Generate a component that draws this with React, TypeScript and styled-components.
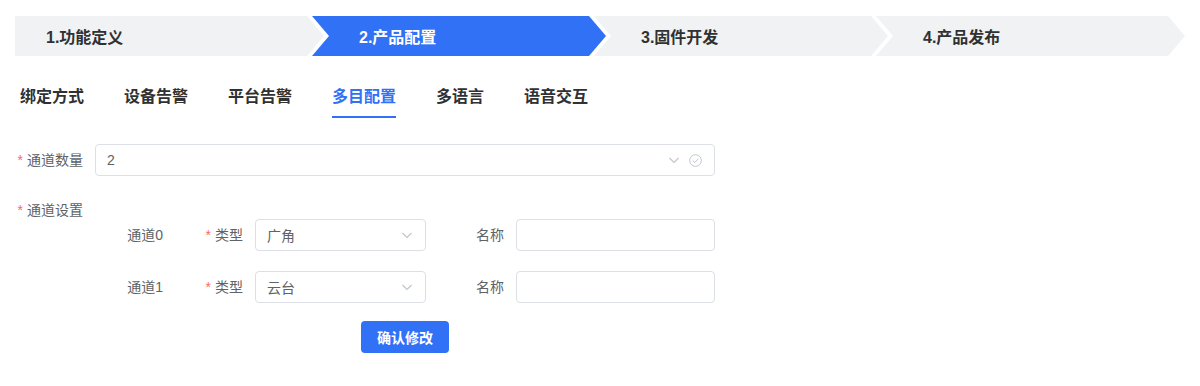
import React from 'react';
import styled, { createGlobalStyle } from 'styled-components';

const GlobalStyle = createGlobalStyle`
    body {
        margin: 0;
        background: #ffffff;
        font-family: "Liberation Sans", "Noto Sans CJK SC", sans-serif;
    }
`;

const primary = '#3071f6';

const Page = styled.div`
    width: 1200px;
    height: 386px;
    padding: 16px 15px 0 15px;
    box-sizing: border-box;
`;

const Steps = styled.div`
    display: flex;
    height: 40px;
`;

const Step = styled.div<{ $active?: boolean; $first?: boolean; $width?: number }>`
    display: flex;
    align-items: center;
    box-sizing: border-box;
    height: 40px;
    ${p => (p.$width ? `width: ${p.$width}px; flex: none;` : 'flex: 1;')}
    margin-left: ${p => (p.$first ? '0' : '-12px')};
    padding-left: ${p => (p.$first ? '31px' : '47px')};
    background: ${p => (p.$active ? primary : '#f1f2f4')};
    color: ${p => (p.$active ? '#ffffff' : '#303133')};
    font-size: 16px;
    font-weight: bold;
    clip-path: ${p =>
        p.$first
            ? 'polygon(0 0, calc(100% - 17px) 0, 100% 50%, calc(100% - 17px) 100%, 0 100%)'
            : 'polygon(0 0, calc(100% - 17px) 0, 100% 50%, calc(100% - 17px) 100%, 0 100%, 17px 50%)'};
`;

const Tabs = styled.div`
    display: flex;
    gap: 40px;
    margin-top: 24px;
    padding-left: 5px;
`;

const Tab = styled.div<{ $active?: boolean }>`
    height: 38px;
    line-height: 34px;
    font-size: 16px;
    font-weight: bold;
    color: ${p => (p.$active ? primary : '#303133')};
    border-bottom: 2px solid ${p => (p.$active ? primary : 'transparent')};
    box-sizing: border-box;
`;

const Form = styled.div`
    margin-top: 26px;
    display: flex;
    flex-direction: column;
    gap: 18px;
`;

const FormItem = styled.div`
    display: flex;
    align-items: flex-start;
`;

const Label = styled.label<{ $width?: number }>`
    flex: none;
    width: ${p => p.$width ?? 80}px;
    box-sizing: border-box;
    padding-right: 12px;
    text-align: right;
    line-height: 32px;
    font-size: 14px;
    color: #606266;
    white-space: nowrap;
`;

const Star = styled.span`
    color: #f56c6c;
    margin-right: 4px;
`;

const Field = styled.div<{ $width?: number }>`
    display: flex;
    align-items: center;
    ${p => (p.$width ? `width: ${p.$width}px; flex: none;` : 'flex: 1;')}
    height: 32px;
    box-sizing: border-box;
    padding: 0 12px 0 11px;
    border: 1px solid #dcdfe6;
    border-radius: 4px;
    font-size: 14px;
    color: #606266;
    background: #ffffff;
`;

const Value = styled.span`
    flex: 1;
`;

const Icons = styled.span`
    display: flex;
    align-items: center;
    gap: 9px;
    color: #c0c4cc;
`;

const Content = styled.div`
    width: 620px;
    display: flex;
    flex-direction: column;
`;

const ChannelList = styled.div`
    display: flex;
    flex-direction: column;
    gap: 20px;
    padding-top: 25px;
`;

const ChannelRow = styled.div`
    display: flex;
    align-items: center;
`;

const Actions = styled.div`
    display: flex;
    justify-content: center;
    margin-top: 18px;
`;

const Button = styled.button`
    width: 88px;
    height: 32px;
    border: none;
    border-radius: 4px;
    background: ${primary};
    color: #ffffff;
    font-family: inherit;
    font-size: 14px;
    font-weight: bold;
    cursor: pointer;
`;

const Chevron = () => (
    <svg width="12" height="12" viewBox="0 0 12 12" fill="none">
        <path d="M1.5 4 L6 8.5 L10.5 4" stroke="currentColor" strokeWidth="1.1" />
    </svg>
);

const CircleCheck = () => (
    <svg width="13" height="13" viewBox="0 0 13 13" fill="none">
        <circle cx="6.5" cy="6.5" r="5.8" stroke="currentColor" strokeWidth="1" />
        <path d="M3.8 6.6 L5.8 8.5 L9.3 4.8" stroke="currentColor" strokeWidth="1" />
    </svg>
);

const steps = ['1.功能定义', '2.产品配置', '3.固件开发', '4.产品发布'];
const stepWidths = [309, 294, 294, undefined];
const tabs = ['绑定方式', '设备告警', '平台告警', '多目配置', '多语言', '语音交互'];
const channels = [
    { name: '通道0', type: '广角' },
    { name: '通道1', type: '云台' },
];

const App: React.FC = () => {
    return (
        <Page>
            <GlobalStyle />
            <Steps>
                {steps.map((s, i) => (
                    <Step key={s} $first={i === 0} $active={i === 1} $width={stepWidths[i]}>
                        {s}
                    </Step>
                ))}
            </Steps>
            <Tabs>
                {tabs.map(t => (
                    <Tab key={t} $active={t === '多目配置'}>{t}</Tab>
                ))}
            </Tabs>
            <Form>
                <FormItem>
                    <Label><Star>*</Star>通道数量</Label>
                    <Field $width={620}>
                        <Value>2</Value>
                        <Icons>
                            <Chevron />
                            <CircleCheck />
                        </Icons>
                    </Field>
                </FormItem>
                <FormItem>
                    <Label><Star>*</Star>通道设置</Label>
                    <Content>
                        <ChannelList>
                            {channels.map(c => (
                                <ChannelRow key={c.name}>
                                    <Label>{c.name}</Label>
                                    <Label><Star>*</Star>类型</Label>
                                    <Field $width={171}>
                                        <Value>{c.type}</Value>
                                        <Icons><Chevron /></Icons>
                                    </Field>
                                    <Label $width={90}>名称</Label>
                                    <Field $width={199} />
                                </ChannelRow>
                            ))}
                        </ChannelList>
                        <Actions>
                            <Button>确认修改</Button>
                        </Actions>
                    </Content>
                </FormItem>
            </Form>
        </Page>
    );
};

export default App;
